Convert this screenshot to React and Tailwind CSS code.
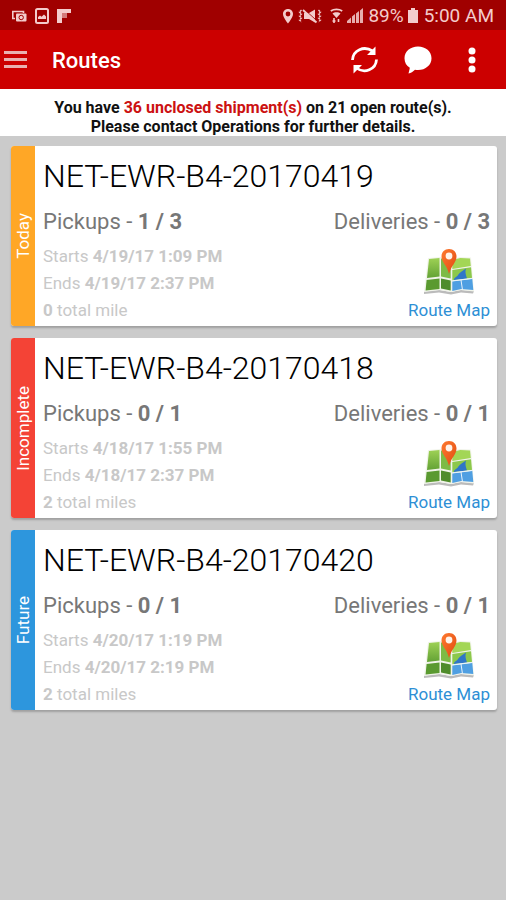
import React from 'react';

const routes = [
  { name: 'NET-EWR-B4-20170419', status: 'Today', color: 'bg-[#ffa726]', pickups: '1 / 3', deliveries: '0 / 3', starts: '4/19/17 1:09 PM', ends: '4/19/17 2:37 PM', miles: '0', unit: 'total mile' },
  { name: 'NET-EWR-B4-20170418', status: 'Incomplete', color: 'bg-[#f44336]', pickups: '0 / 1', deliveries: '0 / 1', starts: '4/18/17 1:55 PM', ends: '4/18/17 2:37 PM', miles: '2', unit: 'total miles' },
  { name: 'NET-EWR-B4-20170420', status: 'Future', color: 'bg-[#2d96dd]', pickups: '0 / 1', deliveries: '0 / 1', starts: '4/20/17 1:19 PM', ends: '4/20/17 2:19 PM', miles: '2', unit: 'total miles' },
];

function StatusBar() {
  return (
    <div className="flex h-[30px] items-center justify-between bg-[#a00000] px-3 pt-[2px] text-[#f3cccc]">
      <div className="flex items-center gap-2">
        <svg width="15" height="14" viewBox="0 0 15 14" fill="none" stroke="currentColor">
          <path d="M3 9.500H.8V2.500H11.500V4" strokeWidth="1.600" />
          <rect x="4" y="4.500" width="10.500" height="8" rx="1" fill="currentColor" stroke="none" />
          <circle cx="9.200" cy="8.500" r="2.200" stroke="#a00000" strokeWidth="1" />
        </svg>
        <svg width="14" height="16" viewBox="0 0 14 16">
          <rect x="1" y="1" width="12" height="14" rx="1.500" fill="none" stroke="currentColor" strokeWidth="2" />
          <path d="M3 11V9l2-1.500 1.500 1.200L9 6.500l2 2V11z" fill="currentColor" />
        </svg>
        <svg width="14" height="14" viewBox="0 0 14 14" fill="currentColor">
          <path d="M0 0h14v4H5v10H0z" />
          <path d="M5 4h5v5H5z" opacity=".6" />
        </svg>
      </div>
      <div className="flex items-center text-[19px] leading-6">
        <svg className="mr-1" width="12" height="16" viewBox="0 0 12 16" fill="currentColor" fillRule="evenodd">
          <path d="M6 1C3 1 1 3.200 1 6c0 3.400 5 9.500 5 9.500S11 9.400 11 6c0-2.800-2-5-5-5zm0 2.600a2.400 2.400 0 1 1 0 4.800 2.400 2.400 0 0 1 0-4.800z" />
        </svg>
        <svg className="mr-2" width="24" height="16" viewBox="0 0 24 16" fill="none" stroke="currentColor">
          <path d="M3.500 2l-2 2 2 2-2 2 2 2-2 2 2 2M20.500 2l2 2-2 2 2 2-2 2 2 2-2 2" strokeWidth="1.400" strokeDasharray="2 .8" />
          <path d="M6 5h5l6-3.500v13L11 11H6z" fill="currentColor" stroke="none" />
          <path d="M7 2l12 11" stroke="#a00000" strokeWidth="1" />
          <path d="M5 2l13.500 12.500" strokeWidth="1.800" />
        </svg>
        <svg className="mr-1" width="13" height="16" viewBox="0 0 13 16" fill="none" stroke="currentColor">
          <path d="M.8 3C4 .8 9 .8 12.200 3" strokeWidth="1.800" />
          <path d="M2.500 5.500c2-1.700 6-1.700 8 0L6.500 10z" fill="currentColor" stroke="none" />
          <path d="M4 10v5M2.500 13h3M8.500 14v-3" strokeWidth="1.600" />
        </svg>
        <svg className="mr-1" width="17" height="16" viewBox="0 0 17 16" fill="currentColor">
          <path d="M0 15v-2l4-3.500V15zM5 15V8.500L8 6v9zM9 15V5.500L12 3v12zM13 15V2.500L16 0v15z" opacity=".85" />
        </svg>
        <span>89%</span>
        <svg className="mr-[6px] ml-1" width="10" height="16" viewBox="0 0 10 16" fill="currentColor">
          <path d="M3 0h4v2h3v13H0V2h3z" />
        </svg>
        <span>5:00 AM</span>
      </div>
    </div>
  );
}

function MapIcon() {
  return (
    <svg width="50" height="47" viewBox="1 0 50 47">
      <defs>
        <linearGradient id="land" x1="0" y1="0" x2="0" y2="1">
          <stop offset="0" stopColor="#9ed155" />
          <stop offset="1" stopColor="#63a235" />
        </linearGradient>
        <linearGradient id="pin" x1="0" y1="0" x2="1" y2="1">
          <stop offset="0" stopColor="#ff7a30" />
          <stop offset="1" stopColor="#e04a10" />
        </linearGradient>
      </defs>
      <path d="M1 43.500l15-1.500 12 2 10-2 13 1-1 2.500-12-1-10 2-12-2L1 46z" fill="#777" opacity=".5" />
      <path d="M5 10l12-1 12 2 8-2 11 .500 3 34-13-1.500-10 2-11-2L1 44z" fill="#f1f4ea" />
      <path d="M6 11l10.500-1v18.500L4 30z" fill="url(#land)" />
      <path d="M3.600 32L16.500 30.500V41L2.600 42.500z" fill="#5a9a30" />
      <path d="M18 10.500l9.700 1.500v18.500l-9.700-2z" fill="#7dbb45" />
      <path d="M18 30.500l9.700 2V42.500l-9.700-2z" fill="#4f8c2b" />
      <path d="M29.300 12l8-2 9.700.500.800 7.500-18.500 3z" fill="#a3d656" />
      <path d="M29.300 22l18.700-2.800 1 10.800-19.700 2.500z" fill="#8cc84b" />
      <path d="M31 32c0-3 3-3 4-5 2-3 5-4.500 8-6.500-1 3-.5 5.500 1 10z" fill="#2f76c8" />
      <path d="M29.300 33.500l20-2.500 1 11-12-1-9 2z" fill="#4f9fe2" />
      <path d="M38 32l1.500 10M29.300 32.800l20-2.500" fill="none" stroke="#e8f2fb" strokeWidth="1" />
      <path d="M26 1c-4.700 0-7.500 3.200-7.500 7.500C18.500 14.500 24 17 26 26 28.500 17 33.500 14.500 33.500 8.500 33.500 4.200 30.700 1 26 1z" fill="url(#pin)" />
      <circle cx="26" cy="8" r="3.400" fill="#fff3ea" />
    </svg>
  );
}

function RouteCard({ route }) {
  return (
    <article className="flex overflow-hidden rounded-[3px] bg-white shadow-[0_2px_2px_#a0a0a0]">
      <div className={'flex w-6 shrink-0 items-center justify-center text-[17px] leading-6 text-white ' + route.color}>
        <span className="rotate-180 [writing-mode:vertical-rl]">{route.status}</span>
      </div>
      <div className="min-w-0 flex-1 pt-[10px] pr-[7px] pb-[2px] pl-2">
        <h2 className="text-[32px] leading-10 font-light text-black">{route.name}</h2>
        <div className="mt-[10px] flex justify-between text-[22px] leading-[31px] text-[#777777]">
          <span>Pickups - <b className="font-bold">{route.pickups}</b></span>
          <span>Deliveries - <b className="font-bold">{route.deliveries}</b></span>
        </div>
        <div className="mt-[6px] flex items-end justify-between text-[17px] leading-[27px] text-[#c8c8c8]">
          <div>
            <p>Starts <b className="font-bold">{route.starts}</b></p>
            <p>Ends <b className="font-bold">{route.ends}</b></p>
            <p><b className="font-bold">{route.miles}</b> {route.unit}</p>
          </div>
          <a href="#map" className="flex flex-col items-center gap-[2px] text-[#2d8fd5]">
            <MapIcon />
            <span>Route Map</span>
          </a>
        </div>
      </div>
    </article>
  );
}

export default function App() {
  return (
    <div className="min-h-screen bg-[#cbcbcb] font-[Roboto,sans-serif]">
      <StatusBar />
      <header className="flex h-[59px] items-center bg-[#cc0000] pr-[30px] text-white">
        <button aria-label="Menu" className="ml-1">
          <svg width="23" height="18" viewBox="0 0 23 18" fill="#e9b0b0">
            <path d="M0 0h23v3H0zM0 7h23v3H0zM0 14h23v3H0z" />
          </svg>
        </button>
        <h1 className="ml-[25px] flex-1 pt-[3px] text-[22px] leading-7 font-medium">Routes</h1>
        <button aria-label="Refresh">
          <svg width="30" height="30" viewBox="0 0 30 30" fill="none" stroke="#fff" strokeWidth="2.800">
            <path d="M2.500 15C3 5 14 .500 22.500 6M26.500 14.500c-.5 10-12 14.500-20 8.500" />
            <path d="M25.500 1.500v8.500H17zM3.500 28.500v-8.500H12z" fill="#fff" stroke="none" />
          </svg>
        </button>
        <button aria-label="Messages" className="ml-6">
          <svg width="28" height="28" viewBox="0 0 28 28" fill="#fff">
            <path d="M14 .500C6.300.500.500 5.600.500 12.200c0 4.400 2 7.500 5.300 9.500-.2 2.200-1 4-1.300 5.800 2.300-.5 4.600-1.800 6.500-3.800 1 .2 2 .3 3 .3 7.700 0 13.500-5.200 13.500-11.800S21.700.500 14 .500z" />
          </svg>
        </button>
        <button aria-label="More options" className="ml-9">
          <svg width="8" height="26" viewBox="0 0 8 26" fill="#fff">
            <circle cx="4" cy="4" r="3.500" />
            <circle cx="4" cy="13" r="3.500" />
            <circle cx="4" cy="22" r="3.500" />
          </svg>
        </button>
      </header>
      <div className="bg-white pt-[9px] text-center text-[16px] leading-[19px] font-bold text-[#111111]">
        <p>You have <span className="text-[#cc1111]">36 unclosed shipment(s)</span> on 21 open route(s).</p>
        <p>Please contact Operations for further details.</p>
      </div>
      <main className="flex flex-col gap-3 pt-[10px] pr-[9px] pl-[11px]">
        {routes.map((route) => (
          <RouteCard key={route.name} route={route} />
        ))}
      </main>
    </div>
  );
}
